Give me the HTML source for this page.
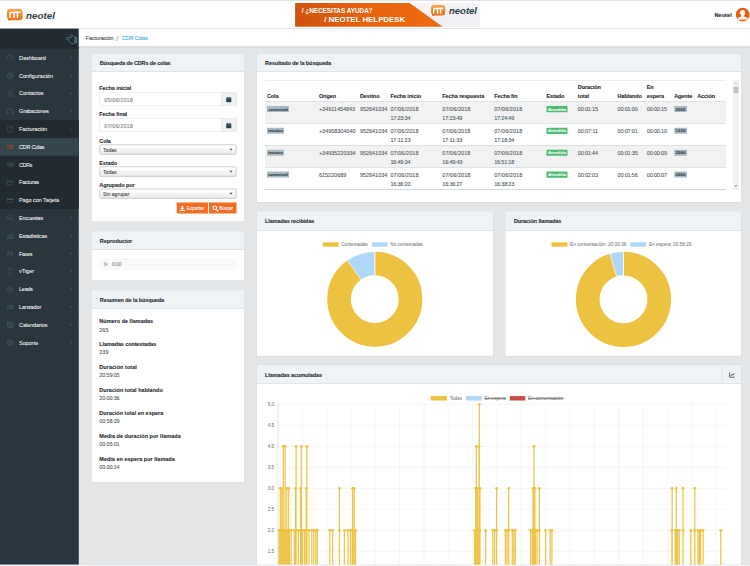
<!DOCTYPE html>
<html lang="es"><head><meta charset="utf-8"><title>Neotel - CDR Colas</title>
<style>
html,body{margin:0;padding:0;}
body{width:750px;height:566px;overflow:hidden;background:#e4e5e6;}
#root{position:absolute;left:0;top:0;width:3000px;height:2264px;transform:scale(0.25);transform-origin:0 0;overflow:hidden;background:#e4e5e6;font-family:"Liberation Sans",sans-serif;}
#root div,#root svg.a{position:absolute;box-sizing:border-box;}
#root .t{white-space:nowrap;line-height:1;-webkit-text-stroke:0.35px currentColor;}
</style></head><body>
<div id="root">
<div style="left:0px;top:0px;width:3000px;height:114px;background:#fff;"></div>
<div style="left:0px;top:0px;width:3000px;height:3.40px;background:#d9dcde;"></div>
<div style="left:315.20px;top:113.20px;width:2684.80px;height:2px;background:#bccad1;"></div>
<svg class="a" style="left:0;top:0;width:3000px;height:2264px" viewBox="0 0 750 566"><defs><linearGradient id="lg6" x1="0" y1="0" x2="0" y2="1"><stop offset="0" stop-color="#f7a652"/><stop offset="1" stop-color="#ec6c12"/></linearGradient></defs><path d="M10.354,8.7 H19.146 Q22.6,8.7 22.6,12.088 V16.928 Q22.6,20.195 19.146,20.195 H11.61 L8.47,20.8 L7.842,18.622 Q6.9,18.138 6.9,15.96 V12.088 Q6.9,8.7 10.354,8.7 Z" fill="url(#lg6)"/><g fill="none" stroke="#fff" stroke-width="1.57" stroke-linecap="round" stroke-linejoin="round"><path d="M10.04,17.412 V14.145 Q10.04,12.33 12.081,12.33 Q14.122,12.33 14.122,14.145 V17.412"/><path d="M15.064,12.33 H19.774 M17.419,12.33 V17.412"/></g><text x="26.1" y="18.5" font-family="Liberation Sans, sans-serif" font-weight="700" font-style="italic" font-size="8.9" fill="#2d3d47" textLength="28.8" lengthAdjust="spacingAndGlyphs">neotel</text><rect x="26.2" y="16.542" width="1.16" height="1.96" fill="#ec6c12" transform="skewX(-12)" style="transform-box:fill-box;transform-origin:50% 100%"/></svg>
<svg class="a" style="left:0;top:0;width:3000px;height:2264px" viewBox="0 0 750 566"><defs><linearGradient id="bn" x1="0" y1="0" x2="1" y2="0"><stop offset="0" stop-color="#cf540f"/><stop offset=".5" stop-color="#e8630d"/><stop offset="1" stop-color="#ef6c10"/></linearGradient><linearGradient id="bn2" x1="0" y1="0" x2="1" y2="1"><stop offset="0" stop-color="#fbfbfd"/><stop offset="1" stop-color="#eeeef3"/></linearGradient></defs><rect x="295.1" y="2.9" width="184.9" height="23.8" fill="url(#bn2)"/><path d="M295.1,2.9 H409.6 L442.7,26.7 H295.1 Z" fill="url(#bn)"/><text x="301.7" y="13.3" font-family="Liberation Sans, sans-serif" font-weight="700" font-size="6.9" fill="#fff" textLength="71" lengthAdjust="spacingAndGlyphs">/ ¿NECESITAS AYUDA?</text><text x="324.2" y="22.05" font-family="Liberation Sans, sans-serif" font-weight="700" font-size="7.9" fill="#fff" textLength="81" lengthAdjust="spacingAndGlyphs">/ NEOTEL HELPDESK</text></svg>
<svg class="a" style="left:0;top:0;width:3000px;height:2264px" viewBox="0 0 750 566"><defs><linearGradient id="lg430" x1="0" y1="0" x2="0" y2="1"><stop offset="0" stop-color="#f7a652"/><stop offset="1" stop-color="#ec6c12"/></linearGradient></defs><path d="M434.068,5.0 H442.132 Q445.3,5.0 445.3,8.08 V12.48 Q445.3,15.45 442.132,15.45 H435.22 L432.34,16.0 L431.764,14.02 Q430.9,13.58 430.9,11.6 V8.08 Q430.9,5.0 434.068,5.0 Z" fill="url(#lg430)"/><g fill="none" stroke="#fff" stroke-width="1.43" stroke-linecap="round" stroke-linejoin="round"><path d="M433.78,12.92 V9.95 Q433.78,8.3 435.652,8.3 Q437.524,8.3 437.524,9.95 V12.92"/><path d="M438.388,8.3 H442.708 M440.548,8.3 V12.92"/></g><text x="449.0" y="14.2" font-family="Liberation Sans, sans-serif" font-weight="700" font-style="italic" font-size="8.7" fill="#2d3d47" textLength="28.0" lengthAdjust="spacingAndGlyphs">neotel</text><rect x="449.1" y="12.286" width="1.13" height="1.91" fill="#ec6c12" transform="skewX(-12)" style="transform-box:fill-box;transform-origin:50% 100%"/></svg>
<div class="t" style="left:2857.60px;top:49.44px;font-size:22.40px;color:#23282c;letter-spacing:0.190px;font-weight:700;">Neotel</div>
<svg class="a" style="left:0;top:0;width:3000px;height:2264px" viewBox="0 0 750 566"><defs><clipPath id="av"><circle cx="742.7" cy="14.7" r="6.9"/></clipPath></defs><circle cx="742.7" cy="14.7" r="6.9" fill="#e8600c"/><g clip-path="url(#av)" fill="#fff"><ellipse cx="742.6" cy="12.8" rx="2.55" ry="2.9"/><path d="M741.3,15 V16.2 Q741.3,16.9 739.5,17.3 L738.2,17.7 Q737.4,18 737.4,18.7 V19.7 H747.9 V18.7 Q747.9,18 747.1,17.7 L745.8,17.3 Q744,16.9 744,16.2 V15 Z"/></g><rect x="737" y="18.85" width="11.4" height="0.3" fill="#e8600c" opacity=".8"/></svg>
<div style="left:0px;top:114.80px;width:315.20px;height:2144px;background:#29363d;"></div>
<div style="left:0px;top:114.80px;width:315.20px;height:80px;background:#212b31;"></div>
<svg class="a" style="left:0;top:0;width:3000px;height:2264px" viewBox="0 0 750 566"><g fill="none" stroke="#56788a" stroke-width="0.85" stroke-linejoin="round" stroke-linecap="round"><path d="M74.5,37.4 C73.6,37.2 73,36 72.6,35.3 C72.2,34.6 71.2,34.5 70.9,35.3 C70.6,36.2 71,37 71.2,37.6 H67.3 C66,37.6 66,39.7 67.3,39.7 H69.3 C68.7,41 69.2,42.2 70,42.8 C70.8,43.7 72.2,43.9 73,43.6 C73.6,43.4 74,43 74.5,42.7"/><rect x="74.7" y="37.0" width="1.9" height="5.9" rx="0.3" fill="#56788a" fill-opacity=".55"/></g></svg>
<div style="left:0px;top:480.40px;width:315.20px;height:356px;background:#212b31;"></div>
<div style="left:0px;top:551.60px;width:315.20px;height:71.20px;background:#34454e;"></div>
<div class="t" style="left:76px;top:221.88px;font-size:21.88px;color:#fff;letter-spacing:0.018px;-webkit-text-stroke:0.15px #fff;">Dashboard</div>
<div class="t" style="left:76px;top:293.88px;font-size:21.88px;color:#fff;letter-spacing:0.076px;-webkit-text-stroke:0.15px #fff;">Configuración</div>
<div class="t" style="left:76px;top:361.88px;font-size:21.88px;color:#fff;letter-spacing:-0.013px;-webkit-text-stroke:0.15px #fff;">Contactos</div>
<div class="t" style="left:76px;top:433.88px;font-size:21.88px;color:#fff;letter-spacing:-0.369px;-webkit-text-stroke:0.15px #fff;">Grabaciones</div>
<div class="t" style="left:76px;top:505.88px;font-size:21.88px;color:#fff;letter-spacing:-0.210px;-webkit-text-stroke:0.15px #fff;">Facturación</div>
<div class="t" style="left:76px;top:577.88px;font-size:21.88px;color:#fff;letter-spacing:-0.914px;-webkit-text-stroke:0.15px #fff;">CDR Colas</div>
<div class="t" style="left:76px;top:649.88px;font-size:21.88px;color:#fff;letter-spacing:-1.586px;-webkit-text-stroke:0.15px #fff;">CDRs</div>
<div class="t" style="left:76px;top:717.88px;font-size:21.88px;color:#fff;letter-spacing:-0.690px;-webkit-text-stroke:0.15px #fff;">Facturas</div>
<div class="t" style="left:76px;top:789.88px;font-size:21.88px;color:#fff;letter-spacing:-0.238px;-webkit-text-stroke:0.15px #fff;">Pago con Tarjeta</div>
<div class="t" style="left:76px;top:861.88px;font-size:21.88px;color:#fff;letter-spacing:-0.685px;-webkit-text-stroke:0.15px #fff;">Encuestas</div>
<div class="t" style="left:76px;top:933.88px;font-size:21.88px;color:#fff;letter-spacing:-0.496px;-webkit-text-stroke:0.15px #fff;">Estadísticas</div>
<div class="t" style="left:76px;top:1005.88px;font-size:21.88px;color:#fff;letter-spacing:-1.517px;-webkit-text-stroke:0.15px #fff;">Faxes</div>
<div class="t" style="left:76px;top:1073.88px;font-size:21.88px;color:#fff;letter-spacing:0.004px;-webkit-text-stroke:0.15px #fff;">vTiger</div>
<div class="t" style="left:76px;top:1145.88px;font-size:21.88px;color:#fff;letter-spacing:-0.883px;-webkit-text-stroke:0.15px #fff;">Leads</div>
<div class="t" style="left:76px;top:1217.88px;font-size:21.88px;color:#fff;letter-spacing:-0.255px;-webkit-text-stroke:0.15px #fff;">Lanzador</div>
<div class="t" style="left:76px;top:1289.88px;font-size:21.88px;color:#fff;letter-spacing:-0.287px;-webkit-text-stroke:0.15px #fff;">Calendarios</div>
<div class="t" style="left:76px;top:1361.88px;font-size:21.88px;color:#fff;letter-spacing:0.138px;-webkit-text-stroke:0.15px #fff;">Soporte</div>
<svg class="a" style="left:0;top:0;width:3000px;height:2264px" viewBox="0 0 750 566"><g transform="translate(10.1,57.8) scale(.92)" fill="none" stroke="#43606c" stroke-width="0.55" stroke-linecap="round" stroke-linejoin="round"><path d="M-2.6,1.6 A3.1,3.1 0 1 1 2.6,1.6"/><path d="M0,0.2 L0.9,-1.1"/></g><path d="M72.3,56.7 L70.6,57.8 L72.3,58.9" fill="none" stroke="#4b6673" stroke-width="0.55"/><g transform="translate(10.1,75.6) scale(.92)" fill="none" stroke="#43606c" stroke-width="0.55" stroke-linecap="round" stroke-linejoin="round"><circle r="2.7"/><circle r="1.1"/><circle r="3.1" stroke-dasharray="0.8 1.2"/></g><path d="M72.3,74.5 L70.6,75.6 L72.3,76.7" fill="none" stroke="#4b6673" stroke-width="0.55"/><g transform="translate(10.1,93.4) scale(.92)" fill="none" stroke="#43606c" stroke-width="0.55" stroke-linecap="round" stroke-linejoin="round"><ellipse cx="0" cy="-1.2" rx="1.5" ry="1.9"/><path d="M-3,3 q0,-1.6 2.2,-2 M3,3 q0,-1.6 -2.2,-2 M-3,3 h6"/></g><path d="M72.3,92.3 L70.6,93.4 L72.3,94.5" fill="none" stroke="#4b6673" stroke-width="0.55"/><g transform="translate(10.1,111.2) scale(.92)" fill="none" stroke="#43606c" stroke-width="0.55" stroke-linecap="round" stroke-linejoin="round"><path d="M-2.8,1.2 v-1 a2.8,2.8 0 0 1 5.6,0 v1"/><rect x="-3" y="0.6" width="1.1" height="2.4" rx="0.4"/><rect x="1.9" y="0.6" width="1.1" height="2.4" rx="0.4"/></g><path d="M72.3,110.1 L70.6,111.2 L72.3,112.3" fill="none" stroke="#4b6673" stroke-width="0.55"/><g transform="translate(10.1,129.0) scale(.92)" fill="none" stroke="#43606c" stroke-width="0.55" stroke-linecap="round" stroke-linejoin="round"><path d="M-2.2,-3 h2.8 l1.8,1.8 v4.2 h-4.6 z M0.6,-3 v1.8 h1.8"/></g><path d="M70.3,128.4 L71.4,129.6 L72.5,128.4" fill="none" stroke="#4b6673" stroke-width="0.55"/><g transform="translate(10.1,146.8) scale(.92)" fill="none" stroke="#b04d2a" stroke-width="0.55" stroke-linecap="round" stroke-linejoin="round"><g stroke-width="0.8"><path d="M-3,-1.7 h0.7 M-3,0 h0.7 M-3,1.7 h0.7 M-1,-1.7 h4.2 M-1,0 h4.2 M-1,1.7 h4.2"/></g></g><g transform="translate(10.1,164.6) scale(.92)" fill="none" stroke="#43606c" stroke-width="0.55" stroke-linecap="round" stroke-linejoin="round"><g stroke-width="0.8"><path d="M-3,-1.7 h0.7 M-3,0 h0.7 M-3,1.7 h0.7 M-1,-1.7 h4.2 M-1,0 h4.2 M-1,1.7 h4.2"/></g></g><g transform="translate(10.1,182.4) scale(.92)" fill="none" stroke="#43606c" stroke-width="0.55" stroke-linecap="round" stroke-linejoin="round"><path d="M-3,-2.2 h2.2 l0.6,0.8 h3.2 v4.2 h-6 z M-3,-0.6 h6"/></g><g transform="translate(10.1,200.2) scale(.92)" fill="none" stroke="#43606c" stroke-width="0.55" stroke-linecap="round" stroke-linejoin="round"><rect x="-3" y="-2.1" width="6" height="4.2" rx="0.5"/><path d="M-3,-0.8 h6" stroke-width="0.9"/></g><g transform="translate(10.1,218.0) scale(.92)" fill="none" stroke="#43606c" stroke-width="0.55" stroke-linecap="round" stroke-linejoin="round"><ellipse cx="-0.8" cy="-0.8" rx="2.3" ry="1.8"/><path d="M0.5,1.6 q1.4,0.8 2.4,-0.2 l0.4,1 M-2.2,0.6 l-0.4,1.1 l1.2,-0.5"/></g><path d="M72.3,216.9 L70.6,218.0 L72.3,219.1" fill="none" stroke="#4b6673" stroke-width="0.55"/><g transform="translate(10.1,235.8) scale(.92)" fill="none" stroke="#43606c" stroke-width="0.55" stroke-linecap="round" stroke-linejoin="round"><path d="M-2.8,2.8 v-2.6 h1.3 v2.6 M-0.6,2.8 v-4.2 h1.3 v4.2 M1.6,2.8 v-5.8 h1.3 v5.8 M-3.2,2.9 h6.4"/></g><path d="M72.3,234.7 L70.6,235.8 L72.3,236.9" fill="none" stroke="#4b6673" stroke-width="0.55"/><g transform="translate(10.1,253.6) scale(.92)" fill="none" stroke="#43606c" stroke-width="0.55" stroke-linecap="round" stroke-linejoin="round"><circle r="3"/><path d="M-3,0 h6 M-1.5,-2.6 v2.6 M1.5,-2.6 v2.6"/></g><path d="M72.3,252.5 L70.6,253.6 L72.3,254.7" fill="none" stroke="#4b6673" stroke-width="0.55"/><g transform="translate(10.1,271.4) scale(.92)" fill="none" stroke="#43606c" stroke-width="0.55" stroke-linecap="round" stroke-linejoin="round"><rect x="-2.2" y="-3" width="4.4" height="6" rx="0.5"/><path d="M-0.4,2.1 h0.8"/></g><path d="M72.3,270.3 L70.6,271.4 L72.3,272.5" fill="none" stroke="#4b6673" stroke-width="0.55"/><g transform="translate(10.1,289.2) scale(.92)" fill="none" stroke="#43606c" stroke-width="0.55" stroke-linecap="round" stroke-linejoin="round"><circle r="3"/><path d="M-0.8,-1.3 L1.3,0 L-0.8,1.3 z"/></g><path d="M72.3,288.1 L70.6,289.2 L72.3,290.3" fill="none" stroke="#4b6673" stroke-width="0.55"/><g transform="translate(10.1,307.0) scale(.92)" fill="none" stroke="#43606c" stroke-width="0.55" stroke-linecap="round" stroke-linejoin="round"><g stroke-width="0.8"><path d="M-3,-1.7 h0.7 M-3,0 h0.7 M-3,1.7 h0.7 M-1,-1.7 h4.2 M-1,0 h4.2 M-1,1.7 h4.2"/></g></g><path d="M72.3,305.9 L70.6,307.0 L72.3,308.1" fill="none" stroke="#4b6673" stroke-width="0.55"/><g transform="translate(10.1,324.8) scale(.92)" fill="none" stroke="#43606c" stroke-width="0.55" stroke-linecap="round" stroke-linejoin="round"><rect x="-3" y="-2.6" width="6" height="5.6" rx="0.4"/><path d="M-3,-1 h6 M-1,-1 v4 M1,-1 v4 M-3,1 h6"/></g><path d="M72.3,323.7 L70.6,324.8 L72.3,325.9" fill="none" stroke="#4b6673" stroke-width="0.55"/><g transform="translate(10.1,342.6) scale(.92)" fill="none" stroke="#43606c" stroke-width="0.55" stroke-linecap="round" stroke-linejoin="round"><circle r="2.7"/><circle r="1.1"/><circle r="3.1" stroke-dasharray="0.8 1.2"/></g><path d="M72.3,341.5 L70.6,342.6 L72.3,343.7" fill="none" stroke="#4b6673" stroke-width="0.55"/></svg>
<div style="left:315.20px;top:115.20px;width:2684.80px;height:71.20px;background:#fff;"></div>
<div style="left:315.20px;top:186px;width:2684.80px;height:2.80px;background:#bfccd3;"></div>
<div class="t" style="left:343.20px;top:141.88px;font-size:21.88px;color:#43494e;letter-spacing:-0.356px;">Facturación</div>
<div class="t" style="left:465.20px;top:142.05px;font-size:26.40px;color:#73848e;letter-spacing:3.065px;">/</div>
<div class="t" style="left:488px;top:141.88px;font-size:21.88px;color:#3aaedb;letter-spacing:-0.736px;">CDR Colas</div>
<div style="left:366px;top:214.60px;width:611.20px;height:671px;background:#fff;box-shadow:0 0 0 1.7px #c8d3da;"></div>
<div style="left:366px;top:214.60px;width:611.20px;height:71.20px;background:#f0f3f5;box-shadow:0 1.7px 0 #c8d3da;"></div>
<div class="t" style="left:399.20px;top:241.88px;font-size:21.88px;color:#23282c;letter-spacing:-0.555px;font-weight:700;">Búsqueda de CDRs de colas</div>
<div style="left:366px;top:926.40px;width:611.20px;height:195.20px;background:#fff;box-shadow:0 0 0 1.7px #c8d3da;"></div>
<div style="left:366px;top:926.40px;width:611.20px;height:71.20px;background:#f0f3f5;box-shadow:0 1.7px 0 #c8d3da;"></div>
<div class="t" style="left:399.20px;top:953.88px;font-size:21.88px;color:#23282c;letter-spacing:-0.153px;font-weight:700;">Reproductor</div>
<div style="left:366px;top:1162.40px;width:611.20px;height:766.40px;background:#fff;box-shadow:0 0 0 1.7px #c8d3da;"></div>
<div style="left:366px;top:1162.40px;width:611.20px;height:71.20px;background:#f0f3f5;box-shadow:0 1.7px 0 #c8d3da;"></div>
<div class="t" style="left:399.20px;top:1189.88px;font-size:21.88px;color:#23282c;letter-spacing:-0.320px;font-weight:700;">Resumen de la búsqueda</div>
<div style="left:1027.20px;top:214.60px;width:1938px;height:593px;background:#fff;box-shadow:0 0 0 1.7px #c8d3da;"></div>
<div style="left:1027.20px;top:214.60px;width:1938px;height:71.20px;background:#f0f3f5;box-shadow:0 1.7px 0 #c8d3da;"></div>
<div class="t" style="left:1060.40px;top:241.88px;font-size:21.88px;color:#23282c;letter-spacing:-0.297px;font-weight:700;">Resultado de la búsqueda</div>
<div style="left:1027.20px;top:846px;width:946px;height:576.80px;background:#fff;box-shadow:0 0 0 1.7px #c8d3da;"></div>
<div style="left:1027.20px;top:846px;width:946px;height:76px;background:#f0f3f5;box-shadow:0 1.7px 0 #c8d3da;"></div>
<div class="t" style="left:1060.40px;top:873.88px;font-size:21.88px;color:#23282c;letter-spacing:-0.350px;font-weight:700;">Llamadas recibidas</div>
<div style="left:2022.40px;top:846px;width:942.80px;height:576.80px;background:#fff;box-shadow:0 0 0 1.7px #c8d3da;"></div>
<div style="left:2022.40px;top:846px;width:942.80px;height:76px;background:#f0f3f5;box-shadow:0 1.7px 0 #c8d3da;"></div>
<div class="t" style="left:2055.60px;top:873.88px;font-size:21.88px;color:#23282c;letter-spacing:-0.320px;font-weight:700;">Duración llamadas</div>
<div style="left:1027.20px;top:1461.20px;width:1938px;height:858.80px;background:#fff;box-shadow:0 0 0 1.7px #c8d3da;"></div>
<div style="left:1027.20px;top:1461.20px;width:1938px;height:72.40px;background:#f0f3f5;box-shadow:0 1.7px 0 #c8d3da;"></div>
<div class="t" style="left:1060.40px;top:1489.88px;font-size:21.88px;color:#23282c;letter-spacing:-0.331px;font-weight:700;">Llamadas acumuladas</div>
<div class="t" style="left:397.20px;top:341.88px;font-size:21.88px;color:#23282c;letter-spacing:-0.283px;font-weight:700;">Fecha inicial</div>
<div style="left:397.60px;top:369.20px;width:548.80px;height:54px;background:#fff;border:2px solid #dde3e8;"></div>
<div style="left:885.20px;top:369.20px;width:61.20px;height:54px;background:#f0f3f5;border:2px solid #dde3e8;"></div>
<div class="t" style="left:416.80px;top:389.88px;font-size:21.88px;color:#76848e;letter-spacing:0.569px;">05/06/2018</div>
<svg class="a" style="left:0;top:0;width:3000px;height:2264px" viewBox="0 0 750 566"><rect x="226.2" y="97.5" width="5.1" height="4.7" rx="0.4" fill="#2f4350"/><rect x="226.2" y="98.6" width="5.1" height="0.35" fill="#7e8f99"/><rect x="227.15" y="96.9" width="0.8" height="1.1" fill="#2f4350"/><rect x="229.55" y="96.9" width="0.8" height="1.1" fill="#2f4350"/></svg>
<div class="t" style="left:397.20px;top:445.88px;font-size:21.88px;color:#23282c;letter-spacing:-0.291px;font-weight:700;">Fecha final</div>
<div style="left:397.60px;top:473.20px;width:548.80px;height:54px;background:#fff;border:2px solid #dde3e8;"></div>
<div style="left:885.20px;top:473.20px;width:61.20px;height:54px;background:#f0f3f5;border:2px solid #dde3e8;"></div>
<div class="t" style="left:416.80px;top:493.88px;font-size:21.88px;color:#76848e;letter-spacing:0.569px;">07/06/2018</div>
<svg class="a" style="left:0;top:0;width:3000px;height:2264px" viewBox="0 0 750 566"><rect x="226.2" y="123.5" width="5.1" height="4.7" rx="0.4" fill="#2f4350"/><rect x="226.2" y="124.6" width="5.1" height="0.35" fill="#7e8f99"/><rect x="227.15" y="122.9" width="0.8" height="1.1" fill="#2f4350"/><rect x="229.55" y="122.9" width="0.8" height="1.1" fill="#2f4350"/></svg>
<div class="t" style="left:397.20px;top:553.88px;font-size:21.88px;color:#23282c;letter-spacing:-0.332px;font-weight:700;">Cola</div>
<div style="left:397.60px;top:577.60px;width:548.80px;height:40.40px;background:linear-gradient(#fff 20%,#f4f4f4 50%,#ececec 100%);border-radius:7.60px;border:2.3px solid #a0a0a0;box-shadow:0 1.5px 2px rgba(0,0,0,.1);"></div>
<div class="t" style="left:412px;top:591.13px;font-size:20.40px;color:#444;">Todas</div>
<svg class="a" style="left:0;top:0;width:3000px;height:2264px" viewBox="0 0 750 566"><path d="M229.65,148.7 h2.7 l-1.35,1.8 z" fill="#3c3c3c"/></svg>
<div class="t" style="left:397.20px;top:641.88px;font-size:21.88px;color:#23282c;letter-spacing:-0.340px;font-weight:700;">Estado</div>
<div style="left:397.60px;top:666px;width:548.80px;height:40.40px;background:linear-gradient(#fff 20%,#f4f4f4 50%,#ececec 100%);border-radius:7.60px;border:2.3px solid #a0a0a0;box-shadow:0 1.5px 2px rgba(0,0,0,.1);"></div>
<div class="t" style="left:412px;top:679.13px;font-size:20.40px;color:#444;">Todas</div>
<svg class="a" style="left:0;top:0;width:3000px;height:2264px" viewBox="0 0 750 566"><path d="M229.65,170.8 h2.7 l-1.35,1.8 z" fill="#3c3c3c"/></svg>
<div class="t" style="left:397.20px;top:729.88px;font-size:21.88px;color:#23282c;letter-spacing:-0.337px;font-weight:700;">Agrupado por</div>
<div style="left:397.60px;top:754.80px;width:548.80px;height:39.20px;background:linear-gradient(#fff 20%,#f4f4f4 50%,#ececec 100%);border-radius:7.60px;border:2.3px solid #a0a0a0;box-shadow:0 1.5px 2px rgba(0,0,0,.1);"></div>
<div class="t" style="left:412px;top:767.13px;font-size:20.40px;color:#444;">Sin agrupar</div>
<svg class="a" style="left:0;top:0;width:3000px;height:2264px" viewBox="0 0 750 566"><path d="M229.65,192.85 h2.7 l-1.35,1.8 z" fill="#3c3c3c"/></svg>
<div style="left:706.80px;top:810.40px;width:124.80px;height:44px;background:#f26d21;"></div>
<div style="left:836.40px;top:810.40px;width:109.20px;height:44px;background:#f26d21;"></div>
<div class="t" style="left:746.80px;top:824.49px;font-size:18.80px;color:#fff;letter-spacing:-0.131px;">Exportar</div>
<div class="t" style="left:876.80px;top:824.49px;font-size:18.80px;color:#fff;letter-spacing:-0.552px;">Buscar</div>
<svg class="a" style="left:0;top:0;width:3000px;height:2264px" viewBox="0 0 750 566"><g fill="#fff"><path d="M181.5,205.9 h1.7 v2.0 h1.4 l-2.25,2.1 l-2.25,-2.1 h1.4 z"/><rect x="179.8" y="210.0" width="5.1" height="1.1"/></g><g fill="none" stroke="#fff" stroke-width="1.05"><circle cx="214.8" cy="207.8" r="1.85"/><path d="M216.2,209.3 L217.8,211" stroke-linecap="round" stroke-width="1.2"/></g></svg>
<div style="left:397.60px;top:1031.60px;width:548.80px;height:50.80px;background:#f9f9f9;"></div>
<svg class="a" style="left:0;top:0;width:3000px;height:2264px" viewBox="0 0 750 566"><path d="M104.4,261.8 L108.4,264.2 L104.4,266.6 z" fill="#b9b9b9"/><rect x="128" y="264" width="101.3" height="0.5" fill="#e6e6e6"/></svg>
<div class="t" style="left:448px;top:1047.81px;font-size:19.60px;color:#7d7d7d;letter-spacing:-0.037px;">0:00</div>
<div class="t" style="left:397.20px;top:1273.88px;font-size:21.88px;color:#23282c;letter-spacing:0.088px;font-weight:700;">Número de llamadas</div>
<div class="t" style="left:397.20px;top:1309.88px;font-size:21.88px;color:#4f585e;">265</div>
<div class="t" style="left:397.20px;top:1365.88px;font-size:21.88px;color:#23282c;letter-spacing:-0.375px;font-weight:700;">Llamadas contestadas</div>
<div class="t" style="left:397.20px;top:1397.88px;font-size:21.88px;color:#4f585e;">239</div>
<div class="t" style="left:397.20px;top:1457.88px;font-size:21.88px;color:#23282c;letter-spacing:0.236px;font-weight:700;">Duración total</div>
<div class="t" style="left:397.20px;top:1489.88px;font-size:21.88px;color:#4f585e;letter-spacing:-0.546px;">20:59:05</div>
<div class="t" style="left:397.20px;top:1549.88px;font-size:21.88px;color:#23282c;letter-spacing:0.156px;font-weight:700;">Duración total hablando</div>
<div class="t" style="left:397.20px;top:1581.88px;font-size:21.88px;color:#4f585e;letter-spacing:-0.546px;">20:00:36</div>
<div class="t" style="left:397.20px;top:1641.88px;font-size:21.88px;color:#23282c;letter-spacing:0.028px;font-weight:700;">Duración total en espera</div>
<div class="t" style="left:397.20px;top:1673.88px;font-size:21.88px;color:#4f585e;letter-spacing:-0.546px;">00:58:29</div>
<div class="t" style="left:397.20px;top:1733.88px;font-size:21.88px;color:#23282c;letter-spacing:0.173px;font-weight:700;">Media de duración por llamada</div>
<div class="t" style="left:397.20px;top:1765.88px;font-size:21.88px;color:#4f585e;letter-spacing:-0.546px;">00:05:01</div>
<div class="t" style="left:397.20px;top:1825.88px;font-size:21.88px;color:#23282c;letter-spacing:0.106px;font-weight:700;">Media en espera por llamada</div>
<div class="t" style="left:397.20px;top:1857.88px;font-size:21.88px;color:#4f585e;letter-spacing:-0.546px;">00:00:14</div>
<div style="left:1060.40px;top:320.40px;width:1844px;height:1.60px;background:#d5dde2;"></div>
<div style="left:1060.40px;top:406px;width:1844px;height:4.20px;background:#bbc8d0;"></div>
<div class="t" style="left:1068px;top:373.88px;font-size:21.88px;color:#23282c;letter-spacing:-0.332px;font-weight:700;">Cola</div>
<div class="t" style="left:1275.60px;top:373.88px;font-size:21.88px;color:#23282c;letter-spacing:-0.329px;font-weight:700;">Origen</div>
<div class="t" style="left:1439.60px;top:373.88px;font-size:21.88px;color:#23282c;letter-spacing:-0.321px;font-weight:700;">Destino</div>
<div class="t" style="left:1561.60px;top:373.88px;font-size:21.88px;color:#23282c;letter-spacing:-0.295px;font-weight:700;">Fecha inicio</div>
<div class="t" style="left:1769.20px;top:373.88px;font-size:21.88px;color:#23282c;letter-spacing:-0.322px;font-weight:700;">Fecha respuesta</div>
<div class="t" style="left:1976.80px;top:373.88px;font-size:21.88px;color:#23282c;letter-spacing:-0.299px;font-weight:700;">Fecha fin</div>
<div class="t" style="left:2186px;top:373.88px;font-size:21.88px;color:#23282c;letter-spacing:-0.340px;font-weight:700;">Estado</div>
<div class="t" style="left:2311.20px;top:337.88px;font-size:21.88px;color:#23282c;letter-spacing:-0.332px;font-weight:700;">Duración</div>
<div class="t" style="left:2311.20px;top:373.88px;font-size:21.88px;color:#23282c;letter-spacing:-0.259px;font-weight:700;">total</div>
<div class="t" style="left:2470px;top:373.88px;font-size:21.88px;color:#23282c;letter-spacing:-0.349px;font-weight:700;">Hablando</div>
<div class="t" style="left:2587.20px;top:337.88px;font-size:21.88px;color:#23282c;letter-spacing:-0.391px;font-weight:700;">En</div>
<div class="t" style="left:2587.20px;top:373.88px;font-size:21.88px;color:#23282c;letter-spacing:-0.329px;font-weight:700;">espera</div>
<div class="t" style="left:2696.80px;top:373.88px;font-size:21.88px;color:#23282c;letter-spacing:-0.346px;font-weight:700;">Agente</div>
<div class="t" style="left:2788.80px;top:373.88px;font-size:21.88px;color:#23282c;letter-spacing:-0.340px;font-weight:700;">Acción</div>
<div style="left:1060.40px;top:408.40px;width:1844px;height:87px;background:#f2f2f2;"></div>
<div style="left:1060.40px;top:494px;width:1844px;height:2.40px;background:#c3cfd6;"></div>
<div style="left:1068px;top:424.20px;width:88.40px;height:24.20px;background:#a9bac4;"></div>
<div class="t" style="left:1073.20px;top:429.84px;font-size:17.20px;color:#1d2a31;letter-spacing:-0.302px;font-weight:700;-webkit-text-stroke:0;">comercial</div>
<div class="t" style="left:1275.60px;top:425.88px;font-size:21.88px;color:#4d575e;">+34911454843</div>
<div class="t" style="left:1439.60px;top:425.88px;font-size:21.88px;color:#4d575e;">952641034</div>
<div class="t" style="left:1561.60px;top:425.88px;font-size:21.88px;color:#4d575e;letter-spacing:0.289px;">07/06/2018</div>
<div class="t" style="left:1561.60px;top:461.88px;font-size:21.88px;color:#4d575e;letter-spacing:-0.696px;">17:23:34</div>
<div class="t" style="left:1769.20px;top:425.88px;font-size:21.88px;color:#4d575e;letter-spacing:0.289px;">07/06/2018</div>
<div class="t" style="left:1769.20px;top:461.88px;font-size:21.88px;color:#4d575e;letter-spacing:-0.696px;">17:23:49</div>
<div class="t" style="left:1976.80px;top:425.88px;font-size:21.88px;color:#4d575e;letter-spacing:0.289px;">07/06/2018</div>
<div class="t" style="left:1976.80px;top:461.88px;font-size:21.88px;color:#4d575e;letter-spacing:-0.696px;">17:24:49</div>
<div style="left:2186px;top:424.20px;width:83.60px;height:24.60px;background:#4dbd74;"></div>
<div class="t" style="left:2192px;top:429.84px;font-size:17.20px;color:#fff;letter-spacing:-0.197px;font-weight:700;-webkit-text-stroke:0;">Atendida</div>
<div class="t" style="left:2311.20px;top:425.88px;font-size:21.88px;color:#4d575e;letter-spacing:-0.596px;">00:01:15</div>
<div class="t" style="left:2470px;top:425.88px;font-size:21.88px;color:#4d575e;letter-spacing:-0.596px;">00:01:00</div>
<div class="t" style="left:2587.20px;top:425.88px;font-size:21.88px;color:#4d575e;letter-spacing:-0.596px;">00:00:15</div>
<div style="left:2696.80px;top:424.20px;width:50.80px;height:24.20px;background:#a9bac4;"></div>
<div class="t" style="left:2702.40px;top:429.84px;font-size:17.20px;color:#1d2a31;letter-spacing:0.334px;font-weight:700;-webkit-text-stroke:0;">2000</div>
<div style="left:1060.40px;top:581.40px;width:1844px;height:2.40px;background:#c3cfd6;"></div>
<div style="left:1068px;top:511.20px;width:68.40px;height:24.20px;background:#a9bac4;"></div>
<div class="t" style="left:1073.20px;top:513.84px;font-size:17.20px;color:#1d2a31;letter-spacing:-0.374px;font-weight:700;-webkit-text-stroke:0;">tecnico</div>
<div class="t" style="left:1275.60px;top:513.88px;font-size:21.88px;color:#4d575e;">+34958304040</div>
<div class="t" style="left:1439.60px;top:513.88px;font-size:21.88px;color:#4d575e;">952641034</div>
<div class="t" style="left:1561.60px;top:513.88px;font-size:21.88px;color:#4d575e;letter-spacing:0.289px;">07/06/2018</div>
<div class="t" style="left:1561.60px;top:549.88px;font-size:21.88px;color:#4d575e;letter-spacing:-0.493px;">17:11:23</div>
<div class="t" style="left:1769.20px;top:513.88px;font-size:21.88px;color:#4d575e;letter-spacing:0.289px;">07/06/2018</div>
<div class="t" style="left:1769.20px;top:549.88px;font-size:21.88px;color:#4d575e;letter-spacing:-0.493px;">17:11:33</div>
<div class="t" style="left:1976.80px;top:513.88px;font-size:21.88px;color:#4d575e;letter-spacing:0.289px;">07/06/2018</div>
<div class="t" style="left:1976.80px;top:549.88px;font-size:21.88px;color:#4d575e;letter-spacing:-0.696px;">17:18:34</div>
<div style="left:2186px;top:511.20px;width:83.60px;height:24.60px;background:#4dbd74;"></div>
<div class="t" style="left:2192px;top:513.84px;font-size:17.20px;color:#fff;letter-spacing:-0.197px;font-weight:700;-webkit-text-stroke:0;">Atendida</div>
<div class="t" style="left:2311.20px;top:513.88px;font-size:21.88px;color:#4d575e;letter-spacing:-0.393px;">00:07:11</div>
<div class="t" style="left:2470px;top:513.88px;font-size:21.88px;color:#4d575e;letter-spacing:-0.596px;">00:07:01</div>
<div class="t" style="left:2587.20px;top:513.88px;font-size:21.88px;color:#4d575e;letter-spacing:-0.596px;">00:00:10</div>
<div style="left:2696.80px;top:511.20px;width:50.80px;height:24.20px;background:#a9bac4;"></div>
<div class="t" style="left:2702.40px;top:513.84px;font-size:17.20px;color:#1d2a31;letter-spacing:0.334px;font-weight:700;-webkit-text-stroke:0;">1330</div>
<div style="left:1060.40px;top:582.80px;width:1844px;height:87.40px;background:#f2f2f2;"></div>
<div style="left:1060.40px;top:668.80px;width:1844px;height:2.40px;background:#c3cfd6;"></div>
<div style="left:1068px;top:598.60px;width:68.40px;height:24.20px;background:#a9bac4;"></div>
<div class="t" style="left:1073.20px;top:601.84px;font-size:17.20px;color:#1d2a31;letter-spacing:-0.374px;font-weight:700;-webkit-text-stroke:0;">tecnico</div>
<div class="t" style="left:1275.60px;top:601.88px;font-size:21.88px;color:#4d575e;">+34935220334</div>
<div class="t" style="left:1439.60px;top:601.88px;font-size:21.88px;color:#4d575e;">952641034</div>
<div class="t" style="left:1561.60px;top:601.88px;font-size:21.88px;color:#4d575e;letter-spacing:0.289px;">07/06/2018</div>
<div class="t" style="left:1561.60px;top:637.88px;font-size:21.88px;color:#4d575e;letter-spacing:-0.696px;">16:49:34</div>
<div class="t" style="left:1769.20px;top:601.88px;font-size:21.88px;color:#4d575e;letter-spacing:0.289px;">07/06/2018</div>
<div class="t" style="left:1769.20px;top:637.88px;font-size:21.88px;color:#4d575e;letter-spacing:-0.696px;">16:49:43</div>
<div class="t" style="left:1976.80px;top:601.88px;font-size:21.88px;color:#4d575e;letter-spacing:0.289px;">07/06/2018</div>
<div class="t" style="left:1976.80px;top:637.88px;font-size:21.88px;color:#4d575e;letter-spacing:-0.696px;">16:51:18</div>
<div style="left:2186px;top:598.60px;width:83.60px;height:24.60px;background:#4dbd74;"></div>
<div class="t" style="left:2192px;top:601.84px;font-size:17.20px;color:#fff;letter-spacing:-0.197px;font-weight:700;-webkit-text-stroke:0;">Atendida</div>
<div class="t" style="left:2311.20px;top:601.88px;font-size:21.88px;color:#4d575e;letter-spacing:-0.596px;">00:01:44</div>
<div class="t" style="left:2470px;top:601.88px;font-size:21.88px;color:#4d575e;letter-spacing:-0.596px;">00:01:35</div>
<div class="t" style="left:2587.20px;top:601.88px;font-size:21.88px;color:#4d575e;letter-spacing:-0.596px;">00:00:09</div>
<div style="left:2696.80px;top:598.60px;width:50.80px;height:24.20px;background:#a9bac4;"></div>
<div class="t" style="left:2702.40px;top:601.84px;font-size:17.20px;color:#1d2a31;letter-spacing:0.334px;font-weight:700;-webkit-text-stroke:0;">2000</div>
<div style="left:1060.40px;top:756.20px;width:1844px;height:2.40px;background:#c3cfd6;"></div>
<div style="left:1068px;top:686px;width:88.40px;height:24.20px;background:#a9bac4;"></div>
<div class="t" style="left:1073.20px;top:689.84px;font-size:17.20px;color:#1d2a31;letter-spacing:-0.302px;font-weight:700;-webkit-text-stroke:0;">comercial</div>
<div class="t" style="left:1275.60px;top:689.88px;font-size:21.88px;color:#4d575e;">615220689</div>
<div class="t" style="left:1439.60px;top:689.88px;font-size:21.88px;color:#4d575e;">952641034</div>
<div class="t" style="left:1561.60px;top:689.88px;font-size:21.88px;color:#4d575e;letter-spacing:0.289px;">07/06/2018</div>
<div class="t" style="left:1561.60px;top:725.88px;font-size:21.88px;color:#4d575e;letter-spacing:-0.696px;">16:36:20</div>
<div class="t" style="left:1769.20px;top:689.88px;font-size:21.88px;color:#4d575e;letter-spacing:0.289px;">07/06/2018</div>
<div class="t" style="left:1769.20px;top:725.88px;font-size:21.88px;color:#4d575e;letter-spacing:-0.696px;">16:36:27</div>
<div class="t" style="left:1976.80px;top:689.88px;font-size:21.88px;color:#4d575e;letter-spacing:0.289px;">07/06/2018</div>
<div class="t" style="left:1976.80px;top:725.88px;font-size:21.88px;color:#4d575e;letter-spacing:-0.696px;">16:38:23</div>
<div style="left:2186px;top:686px;width:83.60px;height:24.60px;background:#4dbd74;"></div>
<div class="t" style="left:2192px;top:689.84px;font-size:17.20px;color:#fff;letter-spacing:-0.197px;font-weight:700;-webkit-text-stroke:0;">Atendida</div>
<div class="t" style="left:2311.20px;top:689.88px;font-size:21.88px;color:#4d575e;letter-spacing:-0.596px;">00:02:03</div>
<div class="t" style="left:2470px;top:689.88px;font-size:21.88px;color:#4d575e;letter-spacing:-0.596px;">00:01:56</div>
<div class="t" style="left:2587.20px;top:689.88px;font-size:21.88px;color:#4d575e;letter-spacing:-0.596px;">00:00:07</div>
<div style="left:2696.80px;top:686px;width:50.80px;height:24.20px;background:#a9bac4;"></div>
<div class="t" style="left:2702.40px;top:689.84px;font-size:17.20px;color:#1d2a31;letter-spacing:0.334px;font-weight:700;-webkit-text-stroke:0;">2000</div>
<div style="left:2930.80px;top:320.40px;width:25.60px;height:439.20px;background:#f1f1f1;"></div>
<div style="left:2934px;top:346.80px;width:19.60px;height:25.60px;background:#c1c1c1;"></div>
<svg class="a" style="left:0;top:0;width:3000px;height:2264px" viewBox="0 0 750 566"><path d="M734.7,84.1 l1.2,-1.2 l1.2,1.2 z" fill="#a3a3a3"/><path d="M734.6,185.4 l1.3,1.3 l1.3,-1.3 z" fill="#505050"/></svg>
<svg class="a" style="left:0;top:0;width:3000px;height:2264px" viewBox="0 0 750 566"><circle cx="374.8" cy="299.2" r="35.7" fill="none" stroke="#edc240" stroke-width="23.6"/><path d="M347.34,260.44 A47.5,47.5 0 0 1 374.8,251.7 L374.8,275.3 A23.9,23.9 0 0 0 360.98,279.70 Z" fill="#afd8f8" stroke="#fff" stroke-width="0.7"/><path d="M374.8,251.7 V275.3" stroke="#fff" stroke-width="0.7"/><circle cx="623.5" cy="299.3" r="35.75" fill="none" stroke="#edc240" stroke-width="23.7"/><path d="M609.80,253.71 A47.6,47.6 0 0 1 623.5,251.7 L623.5,275.4 A23.9,23.9 0 0 0 616.62,276.41 Z" fill="#afd8f8" stroke="#fff" stroke-width="0.7"/><path d="M623.5,251.7 V275.4" stroke="#fff" stroke-width="0.7"/><rect x="322.7" y="242.3" width="15.9" height="4.4" fill="#edc240"/><rect x="371.9" y="242.3" width="15.7" height="4.4" fill="#afd8f8"/><text x="341.2" y="246.1" font-family="Liberation Sans, sans-serif" font-size="4.6" fill="#6a6a6a" textLength="26.3" lengthAdjust="spacingAndGlyphs">Contestadas</text><text x="390.3" y="246.1" font-family="Liberation Sans, sans-serif" font-size="4.6" fill="#6a6a6a" textLength="32.6" lengthAdjust="spacingAndGlyphs">No contestadas</text><rect x="551.4" y="242.3" width="16" height="4.4" fill="#edc240"/><rect x="630.3" y="242.3" width="15.7" height="4.4" fill="#afd8f8"/><text x="570.0" y="246.1" font-family="Liberation Sans, sans-serif" font-size="4.6" fill="#6a6a6a" textLength="56.5" lengthAdjust="spacingAndGlyphs">En conversación: 20:00:36</text><text x="649.0" y="246.1" font-family="Liberation Sans, sans-serif" font-size="4.6" fill="#6a6a6a" textLength="42.5" lengthAdjust="spacingAndGlyphs">En espera: 00:58:29</text><path d="M278.00,404.3 V566 M302.33,404.3 V566 M326.66,404.3 V566 M350.99,404.3 V566 M375.32,404.3 V566 M399.65,404.3 V566 M423.98,404.3 V566 M448.31,404.3 V566 M472.64,404.3 V566 M496.97,404.3 V566 M521.30,404.3 V566 M545.63,404.3 V566 M569.96,404.3 V566 M594.29,404.3 V566 M618.62,404.3 V566 M642.95,404.3 V566 M667.28,404.3 V566 M691.61,404.3 V566 M715.94,404.3 V566 M276.0,404.30 H726.6 M276.0,425.30 H726.6 M276.0,446.30 H726.6 M276.0,467.30 H726.6 M276.0,488.30 H726.6 M276.0,509.30 H726.6 M276.0,530.30 H726.6 M276.0,551.30 H726.6" stroke="#e9e9e9" stroke-width="0.42" fill="none"/><path d="M278.0,404.3 V566" stroke="#d4d4d4" stroke-width="0.42"/><text x="274.2" y="405.95" font-family="Liberation Sans, sans-serif" font-size="4.7" fill="#666" text-anchor="end">5.0</text><text x="274.2" y="426.95" font-family="Liberation Sans, sans-serif" font-size="4.7" fill="#666" text-anchor="end">4.5</text><text x="274.2" y="447.95" font-family="Liberation Sans, sans-serif" font-size="4.7" fill="#666" text-anchor="end">4.0</text><text x="274.2" y="468.95" font-family="Liberation Sans, sans-serif" font-size="4.7" fill="#666" text-anchor="end">3.5</text><text x="274.2" y="489.95" font-family="Liberation Sans, sans-serif" font-size="4.7" fill="#666" text-anchor="end">3.0</text><text x="274.2" y="510.95" font-family="Liberation Sans, sans-serif" font-size="4.7" fill="#666" text-anchor="end">2.5</text><text x="274.2" y="531.95" font-family="Liberation Sans, sans-serif" font-size="4.7" fill="#666" text-anchor="end">2.0</text><text x="274.2" y="552.95" font-family="Liberation Sans, sans-serif" font-size="4.7" fill="#666" text-anchor="end">1.5</text><rect x="430.7" y="396.1" width="16.2" height="4.4" fill="#edc240"/><rect x="466.0" y="396.1" width="15.6" height="4.4" fill="#afd8f8"/><rect x="509.8" y="396.1" width="15.5" height="4.4" fill="#cb4b4b"/><text x="449.7" y="399.9" font-family="Liberation Sans, sans-serif" font-size="4.6" fill="#6a6a6a" textLength="12.3" lengthAdjust="spacingAndGlyphs">Todas</text><text x="484.4" y="399.9" font-family="Liberation Sans, sans-serif" font-size="4.6" fill="#6a6a6a" textLength="21.2" lengthAdjust="spacingAndGlyphs" text-decoration="line-through">En espera</text><text x="528.0" y="399.9" font-family="Liberation Sans, sans-serif" font-size="4.6" fill="#6a6a6a" textLength="35.4" lengthAdjust="spacingAndGlyphs" text-decoration="line-through">En conversación</text><path d="M484.4,398.4 h21.2 M528,398.4 h35.4" stroke="#6a6a6a" stroke-width="0.4"/><path d="M479.3,404.30 V566 M283.3,446.30 V566 M285.1,446.30 V566 M296.1,446.30 V566 M301.4,446.30 V566 M306.9,446.30 V566 M476.3,446.30 V566 M479.0,446.30 V566 M534.0,446.30 V566 M280.3,488.30 V566 M281.8,488.30 V566 M286.8,488.30 V566 M288.7,488.30 V566 M295.6,488.30 V566 M300.6,488.30 V566 M306.2,488.30 V566 M339.4,488.30 V566 M352.6,488.30 V566 M354.2,488.30 V566 M475.7,488.30 V566 M477.5,488.30 V566 M480.0,488.30 V566 M496.6,488.30 V566 M508.7,488.30 V566 M533.0,488.30 V566 M534.9,488.30 V566 M539.3,488.30 V566 M672.1,488.30 V566 M676.3,488.30 V566 M683.1,488.30 V566 M694.8,488.30 V566 M279.0,530.30 V566 M280.9,530.30 V566 M282.6,530.30 V566 M284.3,530.30 V566 M286.0,530.30 V566 M287.7,530.30 V566 M289.4,530.30 V566 M291.1,530.30 V566 M294.4,530.30 V566 M296.1,530.30 V566 M298.3,530.30 V566 M300.5,530.30 V566 M302.6,530.30 V566 M304.7,530.30 V566 M306.9,530.30 V566 M309.0,530.30 V566 M311.8,530.30 V566 M313.8,530.30 V566 M315.8,530.30 V566 M317.4,530.30 V566 M329.8,530.30 V566 M332.6,530.30 V566 M339.4,530.30 V566 M344.4,530.30 V566 M348.0,530.30 V566 M350.4,530.30 V566 M352.2,530.30 V566 M353.9,530.30 V566 M355.6,530.30 V566 M474.6,530.30 V566 M476.4,530.30 V566 M478.2,530.30 V566 M479.8,530.30 V566 M485.6,530.30 V566 M492.8,530.30 V566 M494.6,530.30 V566 M496.6,530.30 V566 M505.4,530.30 V566 M507.0,530.30 V566 M508.7,530.30 V566 M512.3,530.30 V566 M513.8,530.30 V566 M515.3,530.30 V566 M530.6,530.30 V566 M532.3,530.30 V566 M533.8,530.30 V566 M535.4,530.30 V566 M537.0,530.30 V566 M539.4,530.30 V566 M545.6,530.30 V566 M550.2,530.30 V566 M551.9,530.30 V566 M671.9,530.30 V566 M675.3,530.30 V566 M677.6,530.30 V566 M679.3,530.30 V566 M683.1,530.30 V566 M690.8,530.30 V566 M694.7,530.30 V566 M698.0,530.30 V566 M699.4,530.30 V566 M700.7,530.30 V566 M703.1,530.30 V566 M720.7,530.30 V566" stroke="#edc240" stroke-width="1.25" fill="none" opacity=".95"/><g fill="#edc240"><circle cx="479.3" cy="404.30" r="1.4"/><circle cx="283.3" cy="446.30" r="1.4"/><circle cx="285.1" cy="446.30" r="1.4"/><circle cx="296.1" cy="446.30" r="1.4"/><circle cx="301.4" cy="446.30" r="1.4"/><circle cx="306.9" cy="446.30" r="1.4"/><circle cx="476.3" cy="446.30" r="1.4"/><circle cx="479.0" cy="446.30" r="1.4"/><circle cx="534.0" cy="446.30" r="1.4"/><circle cx="280.3" cy="488.30" r="1.4"/><circle cx="281.8" cy="488.30" r="1.4"/><circle cx="286.8" cy="488.30" r="1.4"/><circle cx="288.7" cy="488.30" r="1.4"/><circle cx="295.6" cy="488.30" r="1.4"/><circle cx="300.6" cy="488.30" r="1.4"/><circle cx="306.2" cy="488.30" r="1.4"/><circle cx="339.4" cy="488.30" r="1.4"/><circle cx="352.6" cy="488.30" r="1.4"/><circle cx="354.2" cy="488.30" r="1.4"/><circle cx="475.7" cy="488.30" r="1.4"/><circle cx="477.5" cy="488.30" r="1.4"/><circle cx="480.0" cy="488.30" r="1.4"/><circle cx="496.6" cy="488.30" r="1.4"/><circle cx="508.7" cy="488.30" r="1.4"/><circle cx="533.0" cy="488.30" r="1.4"/><circle cx="534.9" cy="488.30" r="1.4"/><circle cx="539.3" cy="488.30" r="1.4"/><circle cx="672.1" cy="488.30" r="1.4"/><circle cx="676.3" cy="488.30" r="1.4"/><circle cx="683.1" cy="488.30" r="1.4"/><circle cx="694.8" cy="488.30" r="1.4"/><circle cx="279.0" cy="530.30" r="1.4"/><circle cx="280.9" cy="530.30" r="1.4"/><circle cx="282.6" cy="530.30" r="1.4"/><circle cx="284.3" cy="530.30" r="1.4"/><circle cx="286.0" cy="530.30" r="1.4"/><circle cx="287.7" cy="530.30" r="1.4"/><circle cx="289.4" cy="530.30" r="1.4"/><circle cx="291.1" cy="530.30" r="1.4"/><circle cx="294.4" cy="530.30" r="1.4"/><circle cx="296.1" cy="530.30" r="1.4"/><circle cx="298.3" cy="530.30" r="1.4"/><circle cx="300.5" cy="530.30" r="1.4"/><circle cx="302.6" cy="530.30" r="1.4"/><circle cx="304.7" cy="530.30" r="1.4"/><circle cx="306.9" cy="530.30" r="1.4"/><circle cx="309.0" cy="530.30" r="1.4"/><circle cx="311.8" cy="530.30" r="1.4"/><circle cx="313.8" cy="530.30" r="1.4"/><circle cx="315.8" cy="530.30" r="1.4"/><circle cx="317.4" cy="530.30" r="1.4"/><circle cx="329.8" cy="530.30" r="1.4"/><circle cx="332.6" cy="530.30" r="1.4"/><circle cx="339.4" cy="530.30" r="1.4"/><circle cx="344.4" cy="530.30" r="1.4"/><circle cx="348.0" cy="530.30" r="1.4"/><circle cx="350.4" cy="530.30" r="1.4"/><circle cx="352.2" cy="530.30" r="1.4"/><circle cx="353.9" cy="530.30" r="1.4"/><circle cx="355.6" cy="530.30" r="1.4"/><circle cx="474.6" cy="530.30" r="1.4"/><circle cx="476.4" cy="530.30" r="1.4"/><circle cx="478.2" cy="530.30" r="1.4"/><circle cx="479.8" cy="530.30" r="1.4"/><circle cx="485.6" cy="530.30" r="1.4"/><circle cx="492.8" cy="530.30" r="1.4"/><circle cx="494.6" cy="530.30" r="1.4"/><circle cx="496.6" cy="530.30" r="1.4"/><circle cx="505.4" cy="530.30" r="1.4"/><circle cx="507.0" cy="530.30" r="1.4"/><circle cx="508.7" cy="530.30" r="1.4"/><circle cx="512.3" cy="530.30" r="1.4"/><circle cx="513.8" cy="530.30" r="1.4"/><circle cx="515.3" cy="530.30" r="1.4"/><circle cx="530.6" cy="530.30" r="1.4"/><circle cx="532.3" cy="530.30" r="1.4"/><circle cx="533.8" cy="530.30" r="1.4"/><circle cx="535.4" cy="530.30" r="1.4"/><circle cx="537.0" cy="530.30" r="1.4"/><circle cx="539.4" cy="530.30" r="1.4"/><circle cx="545.6" cy="530.30" r="1.4"/><circle cx="550.2" cy="530.30" r="1.4"/><circle cx="551.9" cy="530.30" r="1.4"/><circle cx="671.9" cy="530.30" r="1.4"/><circle cx="675.3" cy="530.30" r="1.4"/><circle cx="677.6" cy="530.30" r="1.4"/><circle cx="679.3" cy="530.30" r="1.4"/><circle cx="683.1" cy="530.30" r="1.4"/><circle cx="690.8" cy="530.30" r="1.4"/><circle cx="694.7" cy="530.30" r="1.4"/><circle cx="698.0" cy="530.30" r="1.4"/><circle cx="699.4" cy="530.30" r="1.4"/><circle cx="700.7" cy="530.30" r="1.4"/><circle cx="703.1" cy="530.30" r="1.4"/><circle cx="720.7" cy="530.30" r="1.4"/></g><path d="M721.9,365.3 V383.4" stroke="#c8d3da" stroke-width="0.42"/><path d="M729.6,372.6 V377.2 H734.6" fill="none" stroke="#23282c" stroke-width="0.7"/><path d="M730.6,376 L732,374.4 L732.9,375.2 L734.3,373.4" fill="none" stroke="#23282c" stroke-width="0.8"/></svg>
<div style="left:0px;top:2258.80px;width:3000px;height:5.20px;background:#f5f7f8;"></div>
<div style="left:336px;top:2257.60px;width:2664px;height:1.60px;background:#c5d1d8;"></div>
</div>
</body></html>
